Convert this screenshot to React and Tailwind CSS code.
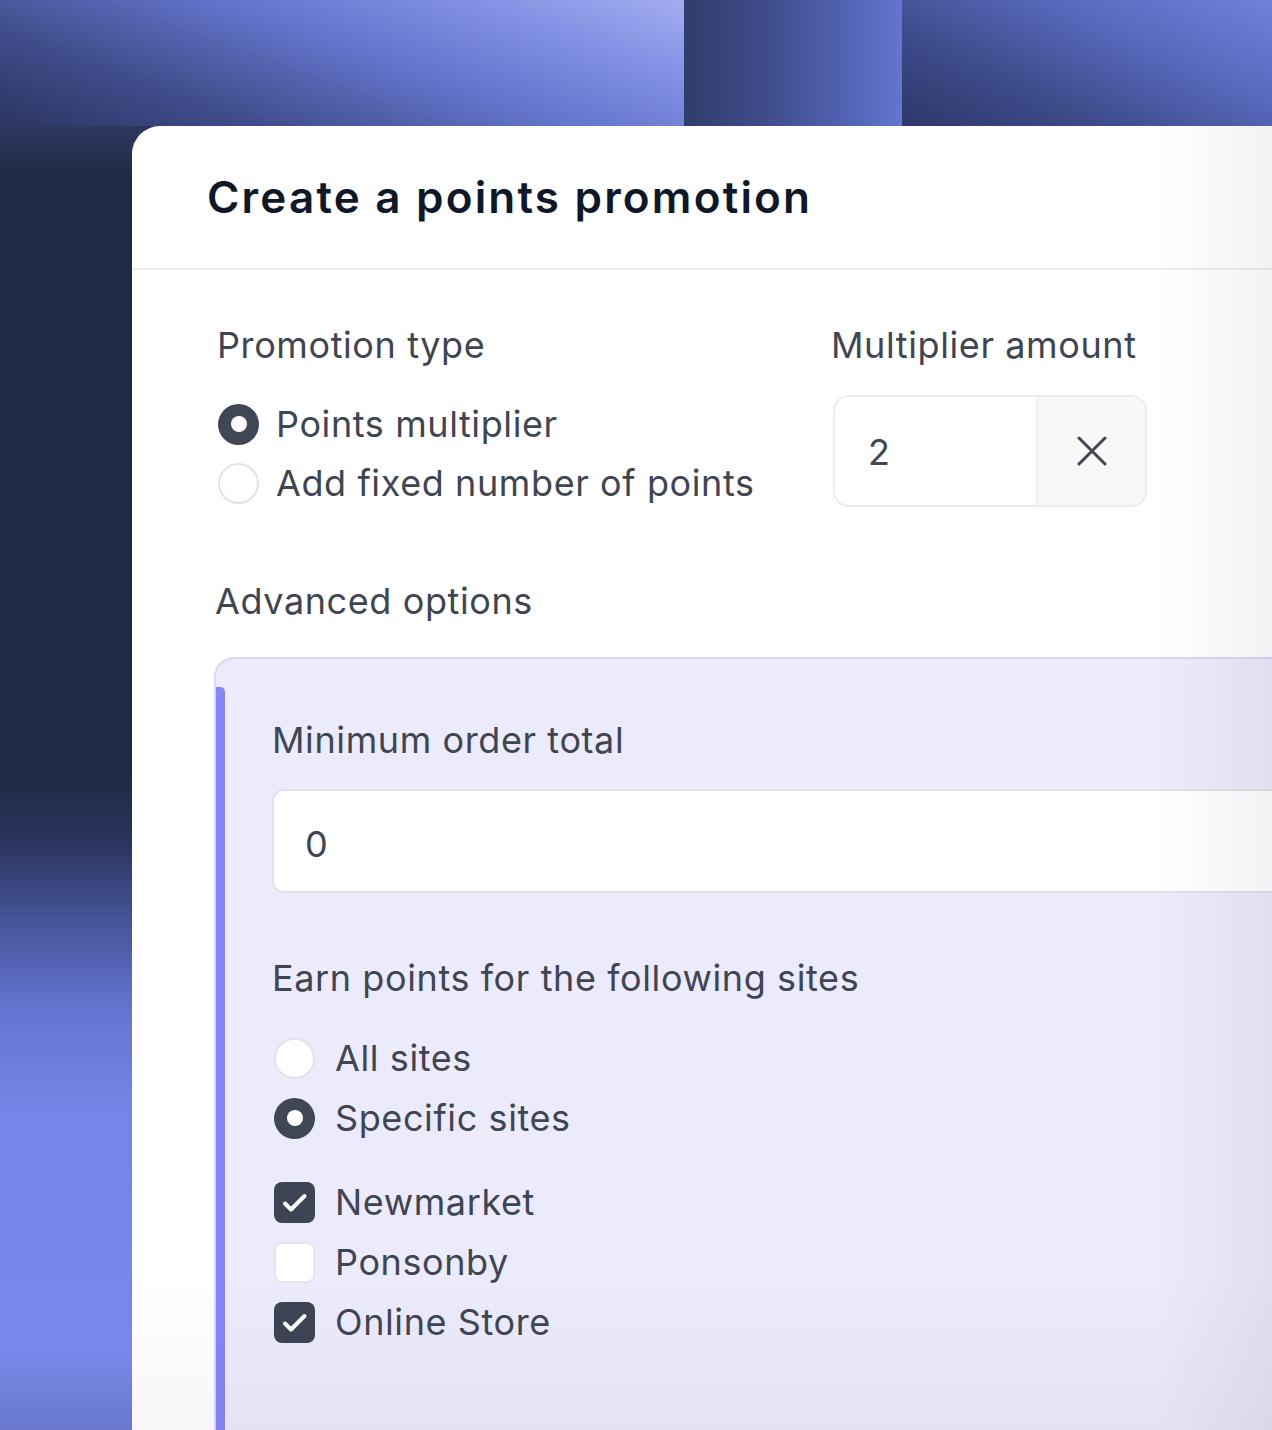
import React from "react";

function Radio({ checked }) {
  if (checked) {
    return (
      <div className="w-[41px] h-[41px] rounded-full bg-[#3f4654] flex items-center justify-center shrink-0">
        <div className="w-[16px] h-[16px] rounded-full bg-white" />
      </div>
    );
  }
  return <div className="w-[41px] h-[41px] rounded-full bg-white border-2 border-[#e3e3e7] shrink-0" />;
}

function Checkbox({ checked }) {
  if (checked) {
    return (
      <div className="w-[41px] h-[41px] rounded-[8px] bg-[#3d4454] shrink-0">
        <svg width="41" height="41" viewBox="0 0 41 41" fill="none">
          <path d="M11 21.5l6 6L30.5 14" stroke="white" strokeWidth="4" strokeLinecap="round" strokeLinejoin="round" />
        </svg>
      </div>
    );
  }
  return <div className="w-[41px] h-[41px] rounded-[8px] bg-white border-2 border-[#e6e6ea] shrink-0" />;
}

const T = "text-[36px] leading-[44px] text-[#3f4553] tracking-[0.6px]";

export default function App() {
  return (
    <div className="relative w-[1272px] h-[1430px] overflow-hidden flex flex-col font-['Inter',sans-serif]">
      {/* top background band */}
      <div className="flex h-[126px] shrink-0">
        <div className="w-[684px] bg-[linear-gradient(20deg,#2b3662_0%,#3f4c8a_25%,#6474cc_55%,#8392e4_80%,#a3adf0_100%)]" />
        <div className="w-[218px] bg-[linear-gradient(90deg,#313d6c_0%,#3e4b88_35%,#5262b4_75%,#6676d0_100%)]" />
        <div className="flex-1 bg-[linear-gradient(25deg,#2d386a_0%,#3c4a88_30%,#5868bc_65%,#7181da_100%)]" />
      </div>

      <div className="flex flex-1 min-h-0 bg-[#2b3559]">
        {/* left background strip */}
        <div className="w-[132px] shrink-0 bg-[linear-gradient(180deg,#2e3960_0%,#1f2a45_4%,#1f2a45_50%,#2b355e_55%,#46549a_61%,#6675d2_68%,#7686e8_76%,#7888ea_94%,#6a78cc_100%)]" />

        {/* card */}
        <div className="relative flex-1 bg-white rounded-tl-[28px] overflow-hidden">
          <div className="h-[144px] flex items-center px-[75px] border-b-2 border-[#ececef]">
            <h1 className="text-[44px] leading-[52px] font-semibold text-[#0e1828] tracking-[2.2px]">
              Create a points promotion
            </h1>
          </div>

          <div className="pl-[85px] pt-[53px]">
            <div className="flex">
              <div className="w-[614px] shrink-0">
                <div className={T}>Promotion type</div>
                <div className="mt-[35px] flex flex-col gap-[15px]">
                  <div className="flex items-center gap-[17px] h-[44px] ml-[1px]">
                    <Radio checked />
                    <span className={T}>Points multiplier</span>
                  </div>
                  <div className="flex items-center gap-[17px] h-[44px] ml-[1px]">
                    <Radio />
                    <span className={T}>Add fixed number of points</span>
                  </div>
                </div>
              </div>
              <div>
                <div className={T}>Multiplier amount</div>
                <div className="mt-[28px] ml-[2px] flex w-[314px] h-[112px] rounded-[16px] border-2 border-[#ebebee] overflow-hidden">
                  <div className={"w-[201px] flex items-center pl-[33px] pt-[2px] " + T}>2</div>
                  <div className="flex-1 bg-[#f8f8f9] border-l-2 border-[#efeff1] flex items-center justify-center">
                    <svg width="30" height="30" viewBox="0 0 30 30" fill="none">
                      <path d="M2 2L28 28M28 2L2 28" stroke="#3f4553" strokeWidth="3" strokeLinecap="round" />
                    </svg>
                  </div>
                </div>
              </div>
            </div>

            <div className={"mt-[72px] -ml-[2px] " + T}>Advanced options</div>

            <div className="mt-[34px] -ml-[3px] w-[1200px] flex rounded-tl-[20px] border-t-2 border-l-2 border-[#d8d8f6] bg-[#ebebfb]">
              <div className="w-[9px] mt-[28px] bg-[#8585f6] rounded-tr-[5px] shrink-0" />
              <div className="flex-1 pl-[47px] pt-[59px] pb-[200px]">
                <div className={T}>Minimum order total</div>
                <div className={"mt-[27px] h-[104px] rounded-[12px] border-2 border-[#e2e2e8] bg-white flex items-center pl-[31px] pt-[6px] " + T}>
                  0
                </div>

                <div className={"mt-[63px] " + T}>Earn points for the following sites</div>
                <div className="mt-[36px] flex flex-col gap-[16px]">
                  <div className="flex items-center gap-[20px] h-[44px] ml-[2px]">
                    <Radio />
                    <span className={T}>All sites</span>
                  </div>
                  <div className="flex items-center gap-[20px] h-[44px] ml-[2px]">
                    <Radio checked />
                    <span className={T}>Specific sites</span>
                  </div>
                </div>
                <div className="mt-[40px] flex flex-col gap-[16px]">
                  <div className="flex items-center gap-[20px] h-[44px] ml-[2px]">
                    <Checkbox checked />
                    <span className={T}>Newmarket</span>
                  </div>
                  <div className="flex items-center gap-[20px] h-[44px] ml-[2px]">
                    <Checkbox />
                    <span className={T}>Ponsonby</span>
                  </div>
                  <div className="flex items-center gap-[20px] h-[44px] ml-[2px]">
                    <Checkbox checked />
                    <span className={T}>Online Store</span>
                  </div>
                </div>
              </div>
            </div>
          </div>

          {/* soft vignette over the card edges */}
          <div className="pointer-events-none absolute inset-0 bg-[linear-gradient(90deg,rgba(40,40,80,0)_0%,rgba(40,40,80,0)_90%,rgba(40,40,80,0.06)_100%)]" />
          <div className="pointer-events-none absolute inset-0 bg-[linear-gradient(180deg,rgba(40,40,80,0)_0%,rgba(40,40,80,0)_88%,rgba(40,40,80,0.04)_100%)]" />
        </div>
      </div>
    </div>
  );
}
